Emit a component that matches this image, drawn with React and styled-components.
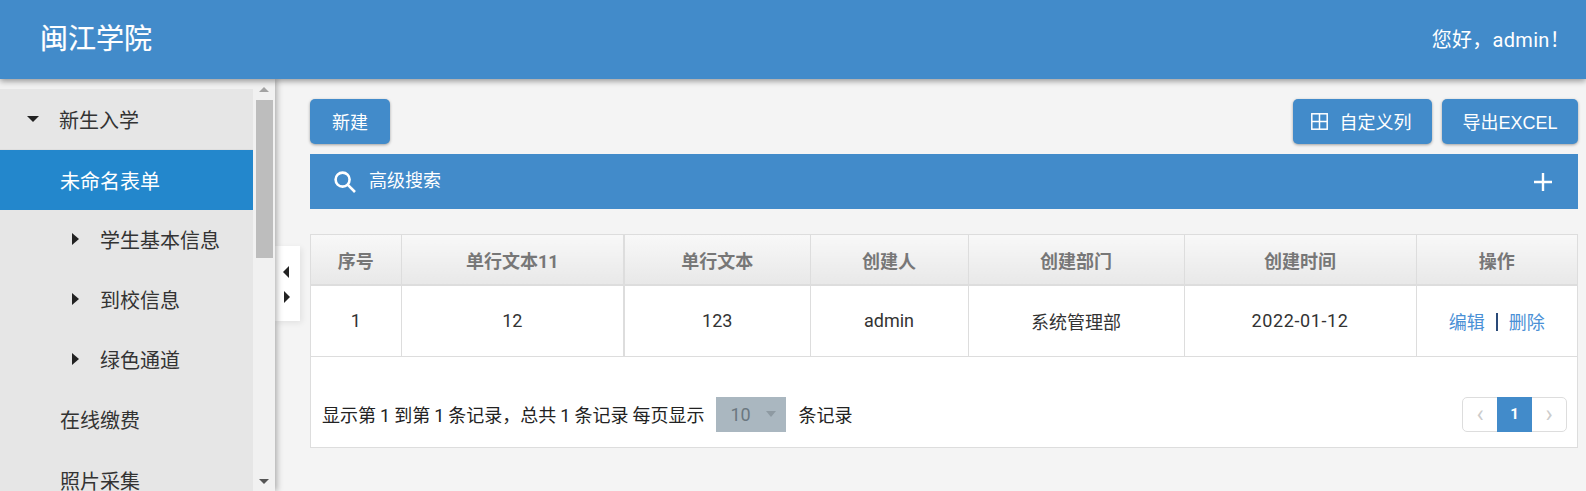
import React from 'react'
import styled, { createGlobalStyle } from 'styled-components'

const Global = createGlobalStyle`
  html, body { margin: 0; padding: 0; height: 491px; overflow: hidden; background: #f4f4f4; }
  body { font-family: Roboto, "Noto Sans CJK SC", sans-serif; color: #333; }
  * { box-sizing: border-box; }
`
const Page = styled.div`
  display: flex;
  flex-direction: column;
  width: 1586px;
  height: 491px;
`
const Header = styled.header`
  position: relative;
  z-index: 3;
  flex: 0 0 79px;
  display: flex;
  align-items: center;
  justify-content: space-between;
  padding: 0 16px 0 40px;
  background: #428bca;
  color: #fff;
  box-shadow: 0 2px 6px rgba(0,0,0,0.4);
`
const Brand = styled.div`
  font-size: 28px;
  line-height: 79px;
  -webkit-text-stroke: 0.2px #fff;
`
const Greeting = styled.div`
  font-size: 20px;
  letter-spacing: 0.3px;
  padding-bottom: 2px;
`
const Body = styled.div`
  position: relative;
  flex: 1;
  display: flex;
  min-height: 0;
`
const Sidebar = styled.aside`
  position: relative;
  z-index: 2;
  flex: 0 0 275px;
  display: flex;
  padding-top: 10px;
  background: #f1f1f1;
  box-shadow: 2px 0 6px rgba(0,0,0,0.3);
  overflow: hidden;
`
const Menu = styled.nav`
  flex: 0 0 253px;
  background: #e6e6e6;
`
const MenuItem = styled.div`
  display: flex;
  align-items: center;
  height: ${p => (p.$first ? 61 : 60)}px;
  padding-left: ${p => p.$indent}px;
  padding-bottom: ${p => (p.$nudge ? 2 : 0)}px;
  font-size: 20px;
  color: ${p => (p.$active ? '#fff' : '#333')};
  background: ${p => (p.$active ? '#2387cc' : 'transparent')};
  border-bottom: ${p => (p.$first ? '1px solid #dedede' : '0')};
`
const Caret = styled.span`
  flex: 0 0 auto;
  width: 0;
  height: 0;
  border-style: solid;
  ${p => p.$dir === 'down' && 'border-width: 6px 6.5px 0; border-color: #222 transparent transparent; margin: 0 20px 0 -33px;'}
  ${p => p.$dir === 'right' && 'border-width: 6.5px 0 6.5px 7px; border-color: transparent transparent transparent #222; margin: 0 21px 0 -28px;'}
  ${p => p.$dir === 'left' && 'border-width: 6px 6px 6px 0; border-color: transparent #222 transparent transparent;'}
  ${p => p.$dir === 'next' && 'border-width: 6px 0 6px 6px; border-color: transparent transparent transparent #222; margin-left: 2px;'}
`
const Scrollbar = styled.div`
  flex: 1;
  display: flex;
  flex-direction: column;
  align-items: center;
  margin-top: -10px;
`
const ArrowUp = styled.span`
  margin-top: 8px;
  border-style: solid;
  border-width: 0 5px 5px;
  border-color: transparent transparent #a3a3a3;
`
const Thumb = styled.div`
  width: 17px;
  height: 158px;
  margin-top: 8px;
  background: #bdbdbd;
`
const ArrowDown = styled.span`
  margin-top: auto;
  margin-bottom: 7px;
  border-style: solid;
  border-width: 5px 5px 0;
  border-color: #555 transparent transparent;
`
const Toggle = styled.div`
  position: absolute;
  z-index: 1;
  left: 275px;
  top: 167px;
  display: flex;
  flex-direction: column;
  align-items: center;
  gap: 13px;
  width: 25px;
  height: 75px;
  padding: 20px 3px 0 0;
  background: #fff;
  box-shadow: 2px 2px 6px rgba(0,0,0,0.08);
`
const Main = styled.main`
  flex: 1;
  min-width: 0;
  padding: 20px 8px 0 35px;
`
const Toolbar = styled.div`
  display: flex;
  gap: 10px;
  margin-bottom: 10px;
`
const Button = styled.button`
  height: 45px;
  width: ${p => p.$w}px;
  padding: 0 0 2px;
  display: flex;
  align-items: center;
  justify-content: center;
  gap: 12px;
  margin-left: ${p => (p.$push ? 'auto' : '0')};
  border: 0;
  border-radius: 5px;
  background: #428bca;
  color: #fff;
  font-family: "Liberation Sans", "Noto Sans CJK SC", sans-serif;
  font-size: 18px;
  box-shadow: 0 1px 3px rgba(0,0,0,0.35);
`
const GridIcon = styled.svg`
  margin: 2px 0 0 -3px;
`
const SearchBar = styled.div`
  display: flex;
  align-items: center;
  height: 55px;
  padding: 0 26px 0 24px;
  margin-bottom: 25px;
  background: #428bca;
  color: #fff;
  font-size: 18px;
`
const SearchLabel = styled.span`
  flex: 1;
  margin-left: 13px;
  padding-bottom: 5px;
`
const Panel = styled.section`
  height: 214px;
  background: #fff;
  border: 1px solid #ddd;
`
const Table = styled.table`
  width: 100%;
  table-layout: fixed;
  border-collapse: collapse;
`
const Th = styled.th`
  width: ${p => p.$w}px;
  height: 50px;
  padding: 0;
  font-size: 18px;
  font-weight: 700;
  color: #777;
  background: linear-gradient(#f8f8f8, #e8e8e8);
  border-right: ${p => (p.$thick ? 2 : 1)}px solid #ddd;
  border-bottom: 2px solid #ddd;
  &:last-child { border-right: 0; }
`
const Td = styled.td`
  height: 71px;
  padding: 0;
  text-align: center;
  font-size: 18px;
  color: #333;
  letter-spacing: ${p => p.$spacing || 0}px;
  border-right: ${p => (p.$thick ? 2 : 1)}px solid #ddd;
  border-bottom: 1px solid #ddd;
  &:last-child { border-right: 0; }
`
const ActionLink = styled.a`
  color: #4a90d6;
`
const Divider = styled.span`
  display: inline-block;
  width: 2px;
  height: 18px;
  margin: 0 11px;
  vertical-align: -2px;
  background: #2a4a78;
`
const Footer = styled.div`
  display: flex;
  align-items: center;
  padding: 40px 10px 0 11px;
  font-size: 18px;
  word-spacing: -0.45px;
  color: #222;
`
const SizeSelect = styled.div`
  display: flex;
  align-items: center;
  gap: 15px;
  width: 70px;
  height: 35px;
  margin: 0 12px;
  padding-left: 14px;
  background: #aab7c0;
  color: #6b7780;
  font-size: 18px;
`
const SelectCaret = styled.span`
  border-style: solid;
  border-width: 6px 5px 0;
  border-color: #8e9aa2 transparent transparent;
`
const Pager = styled.div`
  display: flex;
  margin-left: auto;
  height: 35px;
  border: 1px solid #ddd;
  border-radius: 5px;
`
const PageCell = styled.div`
  width: ${p => (p.$active ? 35 : 34)}px;
  margin: ${p => (p.$active ? '-1px 0' : '0')};
  display: flex;
  align-items: center;
  justify-content: center;
  font-size: ${p => (p.$active ? 15 : 24)}px;
  font-weight: ${p => (p.$active ? 700 : 400)};
  color: ${p => (p.$active ? '#fff' : '#ccc')};
  background: ${p => (p.$active ? '#428bca' : 'transparent')};
`

const columns = [
  { title: '序号', w: 90, value: '1' },
  { title: '单行文本11', w: 223, value: '12', thick: true },
  { title: '单行文本', w: 186, value: '123' },
  { title: '创建人', w: 158, value: 'admin' },
  { title: '创建部门', w: 216, value: '系统管理部' },
  { title: '创建时间', w: 232, value: '2022-01-12', spacing: 0.6 },
  { title: '操作', w: 161 },
]

const App = () => (
  <Page>
    <Global />
    <Header>
      <Brand>闽江学院</Brand>
      <Greeting>您好，admin！</Greeting>
    </Header>
    <Body>
      <Sidebar>
        <Menu>
          <MenuItem $indent={60} $first><Caret $dir="down" />新生入学</MenuItem>
          <MenuItem $indent={60} $active>未命名表单</MenuItem>
          <MenuItem $indent={100} $nudge><Caret $dir="right" />学生基本信息</MenuItem>
          <MenuItem $indent={100} $nudge><Caret $dir="right" />到校信息</MenuItem>
          <MenuItem $indent={100} $nudge><Caret $dir="right" />绿色通道</MenuItem>
          <MenuItem $indent={60} $nudge>在线缴费</MenuItem>
          <MenuItem $indent={60}>照片采集</MenuItem>
        </Menu>
        <Scrollbar>
          <ArrowUp />
          <Thumb />
          <ArrowDown />
        </Scrollbar>
      </Sidebar>
      <Toggle>
        <Caret $dir="left" />
        <Caret $dir="next" />
      </Toggle>
      <Main>
        <Toolbar>
          <Button $w={80}>新建</Button>
          <Button $w={139} $push>
            <GridIcon width="17" height="17" viewBox="0 0 17 17" fill="none" stroke="#fff" strokeWidth="1.5">
              <rect x="0.8" y="0.8" width="15.4" height="15.4" />
              <path d="M8.5 1v15M1 8.5h15" />
            </GridIcon>
            自定义列
          </Button>
          <Button $w={136}>导出EXCEL</Button>
        </Toolbar>
        <SearchBar>
          <svg width="22" height="22" viewBox="0 0 22 22" fill="none" stroke="#fff" strokeWidth="2.6">
            <circle cx="8.6" cy="8.6" r="7" />
            <path d="M13.6 13.6l7.4 7.4" />
          </svg>
          <SearchLabel>高级搜索</SearchLabel>
          <svg width="18" height="18" viewBox="0 0 18 18" stroke="#fff" strokeWidth="2.4">
            <path d="M9 0v18M0 9h18" />
          </svg>
        </SearchBar>
        <Panel>
          <Table>
            <thead>
              <tr>
                {columns.map(c => <Th key={c.title} $w={c.w} $thick={c.thick}>{c.title}</Th>)}
              </tr>
            </thead>
            <tbody>
              <tr>
                {columns.map(c => (
                  <Td key={c.title} $thick={c.thick} $spacing={c.spacing}>
                    {c.value || (
                      <>
                        <ActionLink>编辑</ActionLink>
                        <Divider />
                        <ActionLink>删除</ActionLink>
                      </>
                    )}
                  </Td>
                ))}
              </tr>
            </tbody>
          </Table>
          <Footer>
            显示第 1 到第 1 条记录，总共 1 条记录 每页显示
            <SizeSelect>10<SelectCaret /></SizeSelect>
            条记录
            <Pager>
              <PageCell>‹</PageCell>
              <PageCell $active>1</PageCell>
              <PageCell>›</PageCell>
            </Pager>
          </Footer>
        </Panel>
      </Main>
    </Body>
  </Page>
)

export default App
